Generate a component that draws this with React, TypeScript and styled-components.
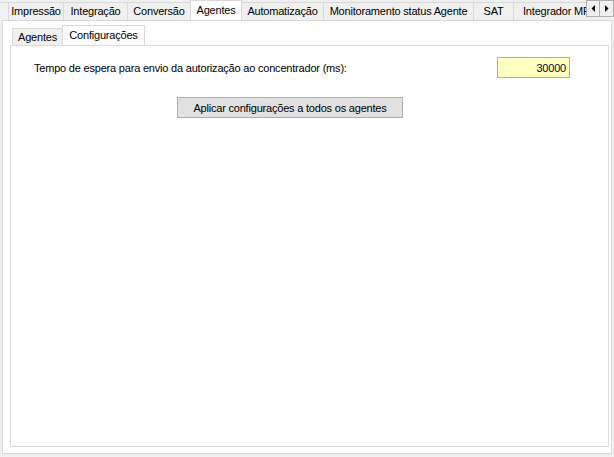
import React from "react";
import styled, { createGlobalStyle } from "styled-components";

const Global = createGlobalStyle`
  html, body { margin: 0; padding: 0; background: #f0f0f0; }
  body {
    font-family: "Liberation Sans", Arial, sans-serif;
    font-size: 11px;
    letter-spacing: -0.2px;
    color: #000;
  }
  * { box-sizing: border-box; }
`;

const Window = styled.div`
  width: 614px;
  height: 457px;
  display: flex;
  flex-direction: column;
  background: #f0f0f0;
  overflow: hidden;
`;

const TabControl = styled.div<{ $grow?: boolean }>`
  display: flex;
  flex-direction: column;
  height: ${(p) => (p.$grow ? "100%" : "454px")};
`;

const TabStrip = styled.div<{ $inset: number }>`
  display: flex;
  align-items: flex-start;
  height: 20px;
  padding-left: ${(p) => p.$inset}px;
  position: relative;
  z-index: 1;
  flex: 0 0 auto;
`;

const TabViewport = styled.div`
  flex: 1;
  min-width: 0;
  height: 100%;
  display: flex;
  align-items: flex-end;
  overflow: hidden;
`;

const Tab = styled.div<{ $w: number; $active?: boolean; $h: number; $first?: boolean; $cut?: boolean; $start?: boolean }>`
  flex: 0 0 ${(p) => p.$w}px;
  width: ${(p) => p.$w}px;
  height: ${(p) => p.$h}px;
  margin-left: ${(p) => (p.$first ? 0 : -1)}px;
  margin-bottom: ${(p) => (p.$active ? -1 : 0)}px;
  align-self: flex-end;
  border: 1px solid #d9d9d9;
  border-bottom: none;
  border-left-style: ${(p) => (p.$cut ? "none" : "solid")};
  background: ${(p) => (p.$active ? "#ffffff" : "#f0f0f0")};
  position: relative;
  z-index: ${(p) => (p.$active ? 2 : 1)};
  display: flex;
  align-items: center;
  justify-content: ${(p) => (p.$start ? "flex-start" : "center")};
  padding-left: ${(p) => (p.$start ? 9 : 0)}px;
  padding-bottom: ${(p) => (p.$active ? 2 : 0)}px;
  white-space: nowrap;
  overflow: hidden;
  line-height: 13px;
`;

const ScrollButtons = styled.div`
  flex: 0 0 28px;
  display: flex;
  height: 17px;
`;

const ScrollButton = styled.div`
  width: 14px;
  height: 17px;
  border: 1px solid #adadad;
  background: #f0f0f0;
  display: flex;
  align-items: center;
  justify-content: center;
  & + & { margin-left: -1px; width: 15px; }
`;

const Panel = styled.div<{ $ml: number; $w: number; $pad: string }>`
  margin-left: ${(p) => p.$ml}px;
  width: ${(p) => p.$w}px;
  flex: 1;
  min-height: 0;
  background: #ffffff;
  border: 1px solid #d9d9d9;
  padding: ${(p) => p.$pad};
  display: flex;
  flex-direction: column;
`;

const Content = styled.div`
  display: flex;
  flex-direction: column;
  padding: 11px 0 0 23px;
`;

const FieldRow = styled.div`
  display: flex;
  align-items: center;
  justify-content: space-between;
  padding-right: 38px;
`;

const Label = styled.span`
  padding-top: 1px;
`;

const NumberBox = styled.div`
  width: 73px;
  height: 21px;
  background: #ffffc0;
  border: 1px solid #adadad;
  display: flex;
  align-items: center;
  justify-content: flex-end;
  padding-right: 3px;
  color: #0a0a30;
`;

const Button = styled.div`
  margin-top: 19px;
  margin-left: 143px;
  width: 226px;
  height: 21px;
  background: #e1e1e1;
  border: 1px solid #adadad;
  display: flex;
  align-items: center;
  justify-content: center;
`;

const Arrow = ({ dir }: { dir: "l" | "r" }) => (
  <svg width="4" height="7" viewBox="0 0 4 7">
    {dir === "l" ? <polygon points="4,0 4,7 0.5,3.5" fill="#000" /> : <polygon points="0,0 0,7 3.5,3.5" fill="#000" />}
  </svg>
);

const outerTabs = [
  { label: "", w: 9, cut: true },
  { label: "Impressão", w: 56 },
  { label: "Integração", w: 65 },
  { label: "Conversão", w: 64 },
  { label: "Agentes", w: 52, active: true },
  { label: "Automatização", w: 83 },
  { label: "Monitoramento status Agente", w: 151 },
  { label: "SAT", w: 41 },
  { label: "Integrador MFe", w: 96, start: true },
];

const innerTabs = [
  { label: "Agentes", w: 51 },
  { label: "Configurações", w: 83, active: true },
];

export default function App() {
  return (
    <Window>
      <Global />
      <TabControl>
        <TabStrip $inset={0}>
          <TabViewport>
            {outerTabs.map((t, i) => (
              <Tab
                key={i}
                $w={t.w}
                $h={t.active ? 21 : 18}
                $active={t.active}
                $first={i === 0}
                $cut={t.cut}
                $start={t.start}
              >
                {t.label}
              </Tab>
            ))}
          </TabViewport>
          <ScrollButtons>
            <ScrollButton>
              <Arrow dir="l" />
            </ScrollButton>
            <ScrollButton>
              <Arrow dir="r" />
            </ScrollButton>
          </ScrollButtons>
        </TabStrip>
        <Panel $ml={2} $w={610} $pad="4px 3px 6px 7px">
          <TabControl $grow>
            <TabStrip $inset={2}>
              <TabViewport>
                {innerTabs.map((t, i) => (
                  <Tab key={i} $w={t.w} $h={t.active ? 21 : 17} $active={t.active} $first={i === 0}>
                    {t.label}
                  </Tab>
                ))}
              </TabViewport>
            </TabStrip>
            <Panel $ml={0} $w={599} $pad="0">
              <Content>
                <FieldRow>
                  <Label>Tempo de espera para envio da autorização ao concentrador (ms):</Label>
                  <NumberBox>30000</NumberBox>
                </FieldRow>
                <Button>Aplicar configurações a todos os agentes</Button>
              </Content>
            </Panel>
          </TabControl>
        </Panel>
      </TabControl>
    </Window>
  );
}
